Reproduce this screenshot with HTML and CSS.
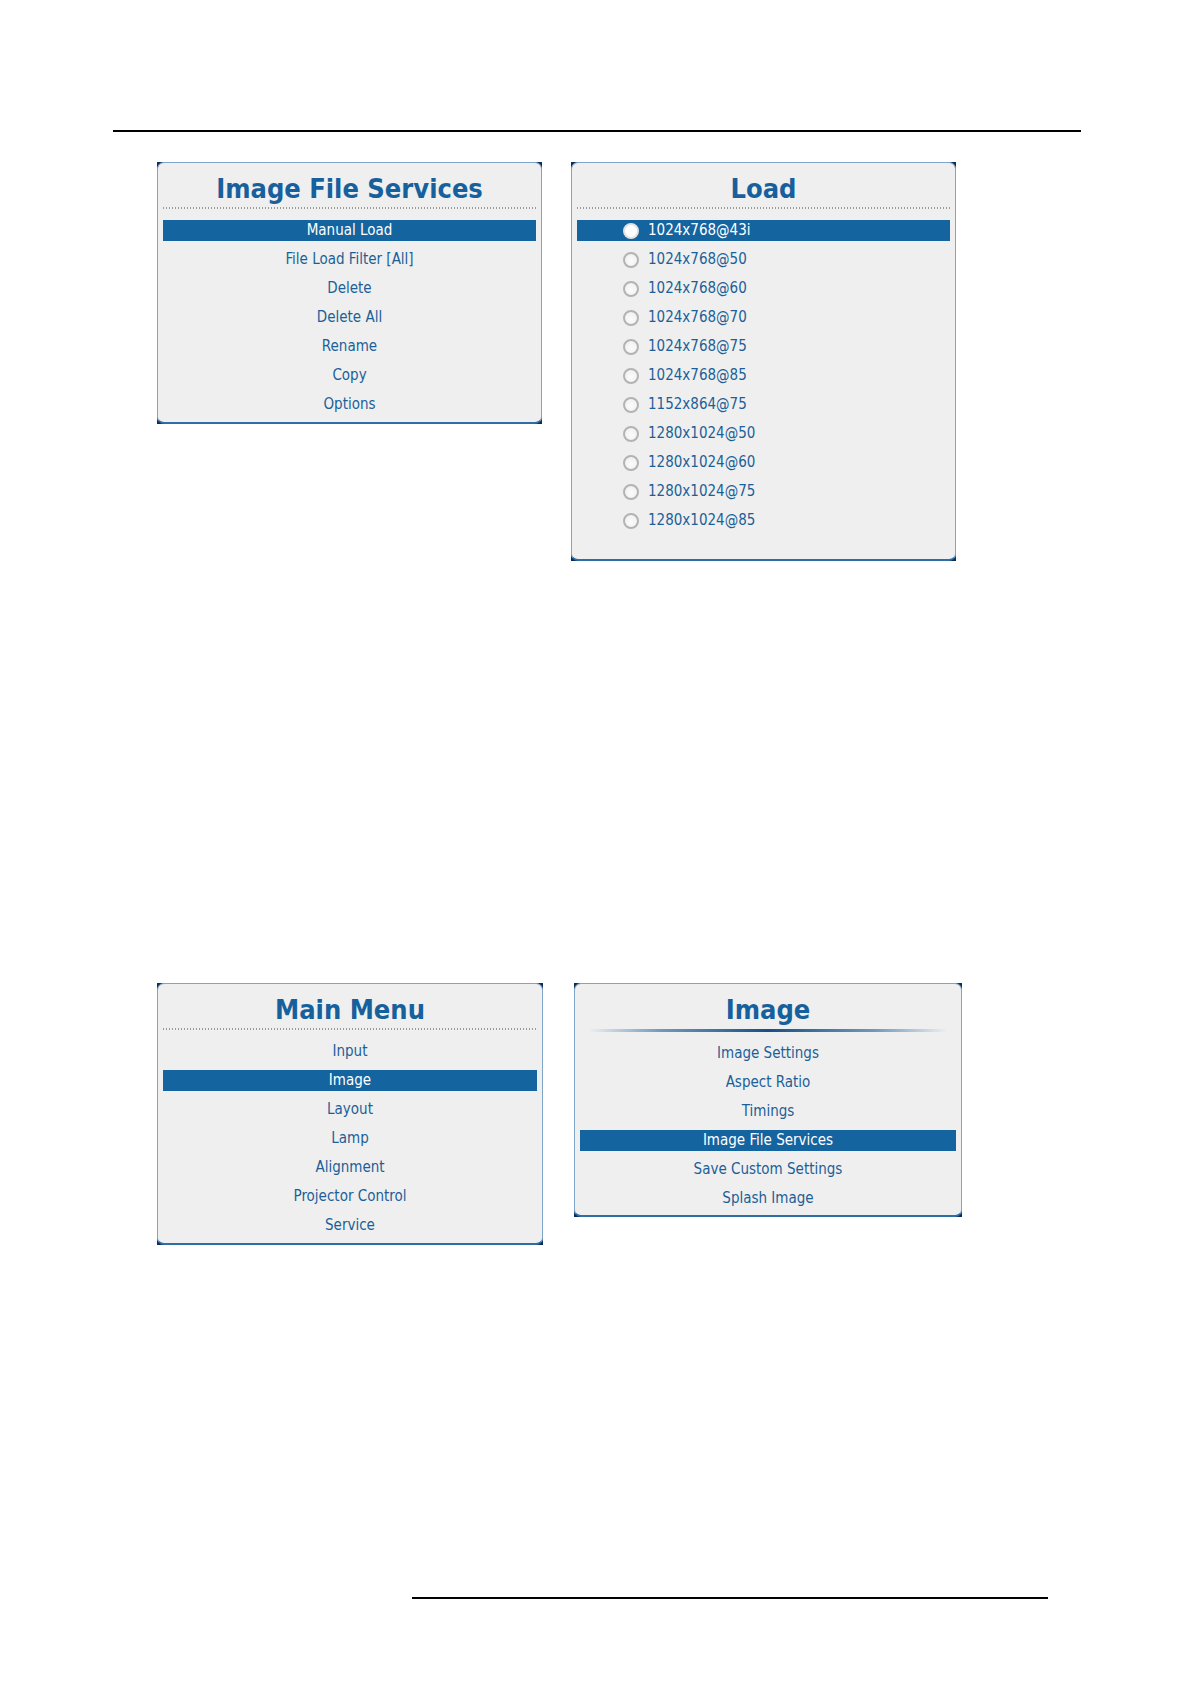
FILE: index.html
```html
<!DOCTYPE html>
<html lang="en">
<head>
<meta charset="utf-8">
<title>Image File Services</title>
<link rel="stylesheet" href="styles.css">
</head>
<body>
<div class="page">
  <div class="rule-top"></div>

  <div class="row row-1">
    <div class="frame frame-a">
      <div class="panel panel-ifs">
        <div class="title">Image File Services</div>
        <div class="dots"></div>
        <ul class="menu">
          <li class="item selected">Manual Load</li>
          <li class="item">File Load Filter [All]</li>
          <li class="item">Delete</li>
          <li class="item">Delete All</li>
          <li class="item">Rename</li>
          <li class="item">Copy</li>
          <li class="item">Options</li>
        </ul>
      </div>
    </div>

    <div class="frame frame-b">
      <div class="panel panel-load">
        <div class="title">Load</div>
        <div class="dots"></div>
        <ul class="menu">
          <li class="item radio-item selected"><span class="radio on"></span><span>1024x768@43i</span></li>
          <li class="item radio-item"><span class="radio"></span><span>1024x768@50</span></li>
          <li class="item radio-item"><span class="radio"></span><span>1024x768@60</span></li>
          <li class="item radio-item"><span class="radio"></span><span>1024x768@70</span></li>
          <li class="item radio-item"><span class="radio"></span><span>1024x768@75</span></li>
          <li class="item radio-item"><span class="radio"></span><span>1024x768@85</span></li>
          <li class="item radio-item"><span class="radio"></span><span>1152x864@75</span></li>
          <li class="item radio-item"><span class="radio"></span><span>1280x1024@50</span></li>
          <li class="item radio-item"><span class="radio"></span><span>1280x1024@60</span></li>
          <li class="item radio-item"><span class="radio"></span><span>1280x1024@75</span></li>
          <li class="item radio-item"><span class="radio"></span><span>1280x1024@85</span></li>
        </ul>
      </div>
    </div>
  </div>

  <div class="row row-2">
    <div class="frame frame-c">
      <div class="panel panel-main">
        <div class="title">Main Menu</div>
        <div class="dots"></div>
        <ul class="menu">
          <li class="item">Input</li>
          <li class="item selected">Image</li>
          <li class="item">Layout</li>
          <li class="item">Lamp</li>
          <li class="item">Alignment</li>
          <li class="item">Projector Control</li>
          <li class="item">Service</li>
        </ul>
      </div>
    </div>

    <div class="frame frame-d">
      <div class="panel panel-image">
        <div class="title">Image</div>
        <div class="glow"></div>
        <ul class="menu">
          <li class="item">Image Settings</li>
          <li class="item">Aspect Ratio</li>
          <li class="item">Timings</li>
          <li class="item selected">Image File Services</li>
          <li class="item">Save Custom Settings</li>
          <li class="item">Splash Image</li>
        </ul>
      </div>
    </div>
  </div>

  <div class="rule-bottom"></div>
</div>
</body>
</html>
```

FILE: styles.css
```css
* {
  box-sizing: border-box;
}

html, body {
  margin: 0;
  padding: 0;
  background: #ffffff;
}

body {
  font-family: "DejaVu Sans Condensed", "DejaVu Sans", sans-serif;
  font-stretch: condensed;
  width: 1190px;
  height: 1684px;
  overflow: hidden;
}

.page {
  padding-top: 130px;
}

.rule-top {
  margin-left: 113px;
  width: 968px;
  height: 2px;
  background: #000000;
}

.row {
  display: flex;
  align-items: flex-start;
  margin-left: 157px;
}

.row-1 {
  margin-top: 30px;
  gap: 29px;
}

.row-2 {
  margin-top: 422px;
  gap: 31px;
}

.rule-bottom {
  margin-top: 352px;
  margin-left: 412px;
  width: 636px;
  height: 2px;
  background: #000000;
}

/* panel frame: navy shows only in the rounded corners */
.frame {
  background: #0c2c5a;
}

.frame-a, .frame-b {
  width: 385px;
}

.frame-c {
  width: 386px;
}

.frame-d {
  width: 388px;
}

.panel {
  background: #efefef;
  border: 1px solid #7fa5c8;
  border-bottom: 2px solid #2e6ea6;
  border-radius: 7px;
  padding: 9px 5px 7px 5px;
}

.panel-load {
  padding-bottom: 28px;
}

.panel-image {
  padding-bottom: 6px;
}

.title {
  height: 34px;
  line-height: 34px;
  text-align: center;
  font-size: 27px;
  font-weight: bold;
  color: #16609d;
  white-space: nowrap;
}

.dots {
  margin-top: 1px;
  margin-bottom: 11px;
  height: 2px;
  background-image: repeating-linear-gradient(to right, #9a9a9a 0 1px, transparent 1px 3px);
}

.glow {
  margin: 2px 9px 11px 9px;
  height: 3px;
  background: linear-gradient(to right, rgba(29, 95, 154, 0) 0%, rgba(29, 95, 154, 0.6) 20%, #174f86 50%, rgba(29, 95, 154, 0.6) 80%, rgba(29, 95, 154, 0) 100%);
  border-radius: 2px;
}

.menu {
  list-style: none;
  margin: 0;
  padding: 0;
  display: flex;
  flex-direction: column;
  gap: 8px;
}

.item {
  height: 21px;
  line-height: 21px;
  text-align: center;
  font-size: 15px;
  color: #1c5f98;
  white-space: nowrap;
}

.item.selected {
  background: #14649f;
  color: #ffffff;
}

.radio-item {
  display: flex;
  align-items: center;
  gap: 9px;
  padding-left: 46px;
  text-align: left;
}

.radio {
  flex: none;
  width: 16px;
  height: 16px;
  border-radius: 50%;
  border: 2px solid #b3b3b3;
  background: radial-gradient(circle at 50% 60%, #fbfbfb 0%, #eeeeee 100%);
}

.radio.on {
  border-color: #e2e2e2;
  background: #ffffff;
}
```
